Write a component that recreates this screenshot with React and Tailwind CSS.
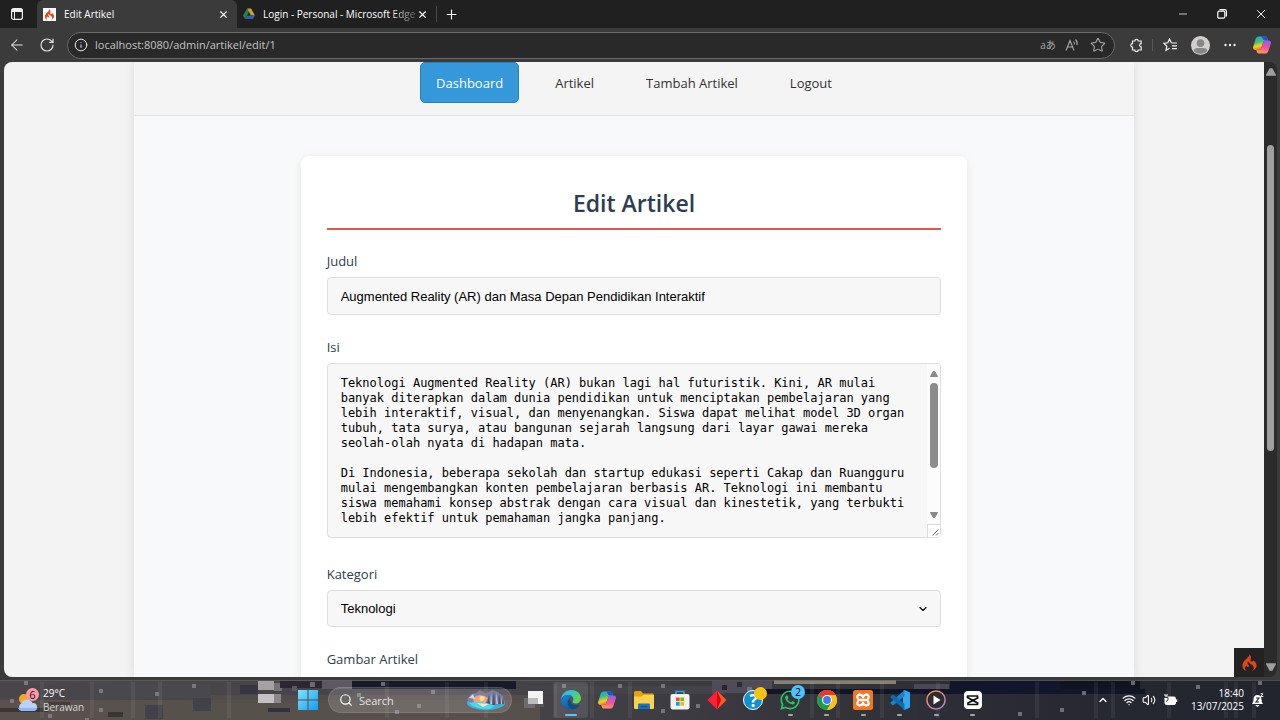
import React from "react";
import { SiCodeigniter } from "react-icons/si";
import { FaWhatsapp } from "react-icons/fa";
import { X, Plus, ArrowLeft, RotateCw, Info, Star, Minus, Search, ChevronUp, ChevronDown, Wifi, Volume2 } from "lucide-react";

const ARTICLE = `Teknologi Augmented Reality (AR) bukan lagi hal futuristik. Kini, AR mulai banyak diterapkan dalam dunia pendidikan untuk menciptakan pembelajaran yang lebih interaktif, visual, dan menyenangkan. Siswa dapat melihat model 3D organ tubuh, tata surya, atau bangunan sejarah langsung dari layar gawai mereka seolah-olah nyata di hadapan mata.

Di Indonesia, beberapa sekolah dan startup edukasi seperti Cakap dan Ruangguru mulai mengembangkan konten pembelajaran berbasis AR. Teknologi ini membantu siswa memahami konsep abstrak dengan cara visual dan kinestetik, yang terbukti lebih efektif untuk pemahaman jangka panjang.`;

function Copilot({ id }) {
  return (
    <svg viewBox="0 0 20 20" className="size-5">
      <defs>
        <linearGradient id={id + "a"} x1="0" y1="0" x2="0.3" y2="1">
          <stop offset="0" stopColor="#1aa7f0" />
          <stop offset="0.45" stopColor="#3bc07a" />
          <stop offset="0.75" stopColor="#f2d21b" />
          <stop offset="1" stopColor="#f2762e" />
        </linearGradient>
        <linearGradient id={id + "b"} x1="0.6" y1="0" x2="0.4" y2="1">
          <stop offset="0" stopColor="#9a5cf0" />
          <stop offset="0.5" stopColor="#f0529c" />
          <stop offset="1" stopColor="#ff9a5a" />
        </linearGradient>
      </defs>
      <path d="M9 1.5h4.2c1.2 0 1.700.7 2.100 1.800l.8 2.300h-2.600c-1.300 0-2 .7-2.400 2L9.300 13c-.4 1.200-1.200 1.900-2.400 1.900H3.300C1.500 14.900.7 13.500 1.200 11.700L3.600 4C4.200 2.300 5.300 1.500 7 1.500z" fill={"url(#" + id + "a)"} />
      <path d="M9 1.500h4.200c1.200 0 1.700.7 2.100 1.800l.8 2.300h-3c-1.500 0-2.100-.8-2.500-2C10.300 2.400 10 1.700 9 1.500z" fill="#2350d8" />
      <path d="M11 18.500H7c-1.200 0-1.800-.7-2.200-1.800L4.200 14.900h2.700c1.200 0 2-.7 2.400-1.900l1.800-5.400c.4-1.300 1.100-2 2.400-2h3.300c1.800 0 2.500 1.400 2 3.100l-2.400 7.200c-.6 1.700-1.700 2.600-3.400 2.600z" fill={"url(#" + id + "b)"} />
    </svg>
  );
}

function TitleBar() {
  return (
    <header className="flex h-7 items-end bg-[#202020] text-white">
      <button aria-label="Tab actions" className="flex h-7 w-[37px] items-center justify-center pr-1">
        <svg viewBox="0 0 12 12" className="size-3">
          <rect x="0.600" y="0.600" width="10.800" height="10.800" rx="2" fill="none" stroke="#eee" strokeWidth="1.200" />
          <path d="M1 1h10v3H1z" fill="#eee" />
          <path d="M3.500 4v7" stroke="#eee" />
        </svg>
      </button>
      <div className="flex h-7 w-[200px] items-center gap-2 rounded-t-md bg-[#3b3b3b] pl-1.5 pr-2">
        <span className="flex size-[13px] items-center justify-center bg-white">
          <SiCodeigniter className="size-[11px] text-[#dd4814]" />
        </span>
        <span className="flex-1 text-[10px]">Edit Artikel</span>
        <button aria-label="Close Edit Artikel"><X className="size-[11px]" strokeWidth={2.5} /></button>
      </div>
      <div className="flex h-7 w-[199px] items-center gap-2 pl-1.5 pr-2">
        <svg viewBox="0 0 24 22" className="size-3 shrink-0">
          <path d="M8 0h8l8 14h-8z" fill="#c9a227" />
          <path d="M8 0l4 7L4 21 0 14z" fill="#23834b" />
          <path d="M8 14h16l-4 7H4z" fill="#2e5fb8" />
        </svg>
        <span className="min-w-0 flex-1 whitespace-nowrap text-[10px]">Login - Personal - Microsoft <span className="bg-gradient-to-r from-white to-[#666] bg-clip-text text-transparent">Edge</span></span>
        <button aria-label="Close Login" className="shrink-0"><X className="size-[11px]" strokeWidth={2.5} /></button>
      </div>
      <span className="mb-1.5 h-4 w-px bg-[#4a4a4a]" />
      <button aria-label="New tab" className="flex h-7 w-7 items-center justify-center"><Plus className="size-[15px]" strokeWidth={1.8} /></button>
      <div className="ml-auto flex">
        <button aria-label="Minimize" className="flex h-7 w-[39px] items-center justify-center"><Minus className="size-3" strokeWidth={1.5} /></button>
        <button aria-label="Restore" className="flex h-7 w-[39px] items-center justify-center">
          <svg viewBox="0 0 10 10" className="size-2.5" fill="none" stroke="#fff" strokeWidth="1.200">
            <rect x="0.800" y="2.200" width="7" height="7" rx="1.200" />
            <path d="M2.500 0.700h5.200a1.700 1.700 0 0 1 1.700 1.700v5" />
          </svg>
        </button>
        <button aria-label="Close window" className="flex h-7 w-[39px] items-center justify-center"><X className="size-[14px]" strokeWidth={1.6} /></button>
      </div>
    </header>
  );
}

function Toolbar() {
  return (
    <div className="flex h-[34px] items-center bg-[#3b3b3b] text-[#e6e6e6]">
      <button aria-label="Back" className="flex w-[34px] justify-center">
        <ArrowLeft className="size-[18px]" strokeWidth={1.4} />
      </button>
      <button aria-label="Refresh" className="flex w-[26px] justify-center"><RotateCw className="size-4" strokeWidth={1.7} /></button>
      <div className="ml-[7px] flex h-[27px] min-w-0 flex-1 items-center rounded-full border border-[#6b6b6b] bg-[#292929] pl-1.5 pr-2">
        <Info className="size-[14px]" strokeWidth={1.7} />
        <input aria-label="Address" defaultValue="localhost:8080/admin/artikel/edit/1" className="ml-[7px] min-w-0 flex-1 bg-transparent text-[11px] text-[#c4c4c4] outline-none" />
        <button aria-label="Translate" className="w-[22px] font-['Open_Sans','Noto_Sans_CJK_JP',sans-serif] text-[10px] text-[#a8a8a8]">aあ</button>
        <button aria-label="Read aloud" className="ml-1.5 flex">
          <svg viewBox="0 0 14 14" className="size-[14px]" fill="none" stroke="#a8a8a8" strokeWidth="1.100">
            <path d="M1 12.500L5 2.500l4 10M2.500 9h5M8.500 3.500q1.200 1.300.8 3M10.500 1.500q2.300 2.300 1.500 5.500" />
          </svg>
        </button>
        <button aria-label="Favorite" className="ml-[11px]"><Star className="size-4 text-[#a8a8a8]" strokeWidth={1.6} /></button>
      </div>
      <button aria-label="Extensions" className="flex w-[37px] justify-center pl-1.5">
        <svg viewBox="0 0 14 14" className="size-[14px]" fill="none" stroke="#eee" strokeWidth="1.200">
          <path d="M2.500 3h2.300a1.700 1.700 0 0 1 3.400 0h3v2.700a1.600 1.600 0 0 0 0 3.200V12H8.200a1.700 1.700 0 0 1-3.400 0H2.500V9a1.700 1.700 0 0 1 0-3.400z" />
        </svg>
      </button>
      <span className="h-3 w-px bg-[#575757]" />
      <button aria-label="Favorites" className="flex w-[34px] justify-center">
        <svg viewBox="0 0 15 14" className="h-[14px] w-[15px]" fill="none" stroke="#eee" strokeWidth="1.200">
          <path d="M8.500 5L6.500 1 4.800 4.800.8 5.300l3 2.900L3 12.300l3.500-2M8.500 5h5.500M9 7.800h5M9 10.600h5" />
        </svg>
      </button>
      <button aria-label="Profile" className="flex w-[26px] justify-center">
        <svg viewBox="0 0 20 20" className="size-[19px]">
          <circle cx="10" cy="10" r="10" fill="#d2d0ce" />
          <circle cx="10" cy="7.500" r="4" fill="#8a8886" />
          <path d="M3 16q0-3.500 4-3.500h6q4 0 4 3.500a9.500 9.500 0 0 1-14 0z" fill="#8a8886" />
        </svg>
      </button>
      <button aria-label="Settings and more" className="flex w-[34px] justify-center">
        <svg viewBox="0 0 12 4" className="h-1 w-3" fill="#eee"><circle cx="1.500" cy="2" r="1.200" /><circle cx="6" cy="2" r="1.200" /><circle cx="10.500" cy="2" r="1.200" /></svg>
      </button>
      <button aria-label="Copilot" className="flex w-[33px] justify-center pr-1"><Copilot id="ct" /></button>
    </div>
  );
}

function Arrow({ down, className }) {
  return (
    <svg viewBox="0 0 8 6" className={className}>
      <path d={down ? "M.5.5h7L4.800 5.500h-1.600z" : "M.5 5.500h7L4.800.5h-1.600z"} fill="currentColor" stroke="currentColor" strokeLinejoin="round" />
    </svg>
  );
}

const links = ["Artikel", "Tambah Artikel", "Logout"];
const labelClass = "mb-1.5 block h-5 text-[13px] font-medium leading-5 text-[#2c3e50]";

function Page() {
  return (
    <div className="mx-auto h-full max-w-[1000px] bg-[#f8f9fb] shadow-[0_0_10px_rgba(0,0,0,0.1)]">
      <nav className="flex justify-center gap-5 border-b border-[#e2e3e4] bg-[#f4f4f4] pb-3">
        <a href="#dashboard" className="flex h-[41px] items-center rounded-[5px] border border-[#2980b9] bg-[#3498db] px-[15px] pt-0.5 text-[13px] font-medium text-white">Dashboard</a>
        {links.map((l) => (
          <a key={l} href="#menu" className="flex h-[41px] items-center px-4 pt-0.5 text-[13px] font-medium text-[#333]">{l}</a>
        ))}
      </nav>
      <form className="mx-auto mt-10 w-2/3 rounded-lg bg-white px-[26px] pb-8 pt-[25px] shadow-[0_2px_10px_rgba(0,0,0,0.08)]">
        <h2 className="mb-[21px] h-[49px] border-b-2 border-[#df5a4c] text-center text-[23px] font-semibold leading-[44px] text-[#2c3e50]">Edit Artikel</h2>
        <div className="mb-[22px]">
          <label htmlFor="judul" className={labelClass}>Judul</label>
          <input id="judul" defaultValue="Augmented Reality (AR) dan Masa Depan Pendidikan Interaktif" className="block h-[38px] w-full rounded border border-[#dedede] bg-[#f7f7f7] px-[13px] font-['Liberation_Sans',sans-serif] text-[13px] text-black" />
        </div>
        <div className="mb-[26px]">
          <label htmlFor="isi" className={labelClass}>Isi</label>
          <div className="flex h-[175px] overflow-hidden rounded border border-[#dedede] bg-[#f7f7f7]">
            <textarea id="isi" defaultValue={ARTICLE} className="min-w-0 flex-1 resize-none overflow-hidden bg-transparent pb-2 pl-[13px] pr-2 pt-3 font-['DejaVu_Sans_Mono',monospace] text-xs leading-[15px] text-black outline-none" />
            <div className="flex w-[13px] flex-col items-center bg-[#fcfcfc] text-[#8b8b8b]">
              <Arrow className="mt-[7px] h-1.5 w-2" />
              <div className="mt-1.5 h-[85px] w-2 rounded-full bg-[#8b8b8b]" />
              <Arrow down className="mt-auto h-1.5 w-2" />
              <div className="mt-1.5 flex h-[13px] w-full items-end justify-end border-l border-t border-[#dcdcdc] bg-white p-px">
                <svg viewBox="0 0 7 7" className="size-[7px]" stroke="#555" strokeWidth="0.900"><path d="M0.500 6.500l6-6M4 6.500l2.500-2.500" /></svg>
              </div>
            </div>
          </div>
        </div>
        <div className="mb-[22px]">
          <label htmlFor="kategori" className={labelClass}>Kategori</label>
          <div className="grid items-center">
            <select id="kategori" className="col-start-1 row-start-1 h-[37px] w-full appearance-none rounded border border-[#dedede] bg-[#f7f7f7] px-[13px] font-['Liberation_Sans',sans-serif] text-[13px] text-black">
              <option>Teknologi</option>
            </select>
            <ChevronDown className="pointer-events-none col-start-1 row-start-1 mr-3 size-3 justify-self-end text-black" strokeWidth={2.2} />
          </div>
        </div>
        <label htmlFor="gambar" className={labelClass}>Gambar Artikel</label>
        <input id="gambar" type="file" className="text-[13px]" />
      </form>
    </div>
  );
}

const blocks = [
  [0, 20, 540, 20, "#5b544e", 0.8], [210, 15, 330, 8, "#554f4b", 0.8], [0, 4, 95, 13, "#48464b", 0.8],
  [95, 3, 115, 15, "#4a4950", 0.8], [145, 25, 18, 14, "#42414b", 1], [193, 18, 18, 13, "#41414a", 1],
  [0, 28, 48, 4, "#3c3633", 1], [48, 22, 22, 4, "#3f3a38", 0.8], [108, 32, 15, 5, "#3a3532", 1], [240, 5, 18, 9, "#353640", 1],
  [258, 1, 16, 9, "#a8a1a4", 1], [258, 14, 16, 9, "#c5c0c6", 1], [274, 3, 8, 8, "#77727a", 1], [274, 14, 7, 9, "#8b878d", 1],
  [280, 1, 46, 7, "#2b2833", 1], [322, 0, 30, 9, "#5c5864", 1], [352, 1, 164, 8, "#171a2b", 1],
  [292, 6, 5, 5, "#5e5964", 1], [310, 2, 5, 5, "#6d6873", 1], [268, 28, 22, 4, "#30323e", 1],
  [516, 6, 210, 8, "#44434a", 1], [712, 1, 60, 12, "#4f4c58", 1], [722, 5, 5, 5, "#262633", 1], [737, 2, 5, 5, "#2c2b38", 1], [747, 7, 5, 5, "#737080", 1],
  [760, 9, 385, 5, "#111526", 1], [950, 1, 165, 13, "#10172a", 1], [774, 0, 122, 4, "#878172", 1],
  [1060, 1, 80, 8, "#101421", 1], [914, 4, 35, 5, "#4b4856", 1],
];
const sparks = [[24, 1], [192, 4], [155, 12], [99, 9], [99, 28], [10, 19], [48, 34], [85, 38], [381, 2], [357, 13], [431, 10], [417, 24], [395, 30], [562, 4], [618, 4], [661, 4], [696, 24], [661, 29], [1018, 32], [1060, 28], [1082, 11], [1131, 1], [1196, 5], [1258, 1]];
const rails = [40, 90, 131, 158, 227, 385, 445, 484, 553, 590, 628, 810, 836, 880, 936, 1035, 1094, 1111, 1167, 1224, 1234, 1252];

function Wallpaper() {
  return (
    <svg viewBox="0 0 1280 40" preserveAspectRatio="none" className="absolute inset-0 h-full w-full" aria-hidden="true">
      <defs>
        <linearGradient id="wall"><stop offset="0" stopColor="#4b474a" /><stop offset="0.4" stopColor="#454348" /><stop offset="0.55" stopColor="#3a3a40" /><stop offset="0.8" stopColor="#292a32" /><stop offset="1" stopColor="#22252e" /></linearGradient>
      </defs>
      <rect width="1280" height="40" fill="url(#wall)" />
      {blocks.map(([x, y, w, h, c, o], i) => <rect key={i} x={x} y={y} width={w} height={h} fill={c} opacity={o} />)}
      {rails.map((x) => <rect key={x} x={x} y="2" width="4" height="36" fill="#fff" opacity="0.060" />)}
      {sparks.map(([x, y], i) => <rect key={i} x={x} y={y} width="4" height="4" fill="#8b8b93" opacity="0.700" />)}
      <rect width="1280" height="1" fill="#686868" opacity="0.600" />
    </svg>
  );
}

const apps = [
  ["Task view", <svg viewBox="0 0 22 20" className="h-5 w-[22px]"><path d="M1 8h11v10H1z" fill="#6c6c6c" /><path d="M12 12h9v5h-9z" fill="#555" /><path d="M5 1h15v13H5z" fill="#f4f4f4" /><path d="M5 8h10v6H5z" fill="#bcbcbc" /></svg>],
  ["Edge", <svg viewBox="0 0 20 20" className="size-5">
    <defs>
      <linearGradient id="e1" x1="0" x2="1" y2="0.400"><stop offset="0" stopColor="#2cb7ee" /><stop offset="0.500" stopColor="#35c5c8" /><stop offset="1" stopColor="#62d44e" /></linearGradient>
      <linearGradient id="e2" x1="0" y1="0" x2="0.500" y2="1"><stop offset="0" stopColor="#1a86d8" /><stop offset="1" stopColor="#0d5ca8" /></linearGradient>
    </defs>
    <path d="M0 9.500C.5 4 4.700 0 10.200 0 16 0 20 4 20 8.200c0 3.200-2.500 5.300-5.500 5.300-2 0-3-.7-3-1.400s.9-1 .9-2.500C12.600 7 10.200 5 7 5 3.500 5 .8 7 0 9.500z" fill="url(#e1)" />
    <path d="M0 10c.6-3 3.500-5 7-5 2 0 3.500.7 4.500 1.800C8.500 6.800 6.500 9 6.500 12c0 4 3 7 7.500 6.800A10 10 0 0 1 0 10z" fill="url(#e2)" />
    <path d="M9 9C7 10.500 6.500 12 6.700 13.500 7.200 17 10 19 13.500 19c2.200-.7 4-2 5-3.800.3-.6-.1-.8-.6-.5C13.500 16.800 9 14 9 9z" fill="#114a8b" />
  </svg>, "active"],
  ["Copilot", <Copilot id="cb" />],
  ["File Explorer", <svg viewBox="0 0 20 18" className="h-[18px] w-5"><path d="M0 1.500Q0 0 1.500 0H7l2 2.500h9.500Q20 2.500 20 4v13.500H0z" fill="#e6a117" /><path d="M0 5.500h7.500L9.500 4H20v12.500Q20 18 18.500 18h-17Q0 18 0 16.500z" fill="#ffd04c" /><path d="M4 18v-4.500Q4 12.500 5 12.500h10q1 0 1 1V18z" fill="#1474c4" /><path d="M6.500 15h7v1.200h-7z" fill="#0a4d91" /></svg>],
  ["Microsoft Store", <svg viewBox="0 0 20 20" className="size-5"><path d="M6 5V1.500h8V5" fill="none" stroke="#30a9dc" strokeWidth="1.500" /><rect x="0.500" y="4" width="19" height="15.500" rx="2" fill="#f3f3f3" /><path d="M6 7.500h3.700v3.700H6z" fill="#f25022" /><path d="M10.400 7.500h3.700v3.700h-3.700z" fill="#7fba00" /><path d="M6 12h3.700v3.700H6z" fill="#00a4ef" /><path d="M10.400 12h3.700v3.700h-3.700z" fill="#ffb900" /></svg>],
  ["Diamond", <svg viewBox="0 0 20 20" className="size-5"><path d="M10 .5v19L.5 10z" fill="#ff1f3a" /><path d="M10 .5L14 10l-4 9.500z" fill="#e0000c" /><path d="M10 .5l9.500 9.500-9.500 9.500L14 10z" fill="#ff5a1e" /></svg>],
  ["Help", <span className="relative flex size-5 items-center justify-center rounded-full border border-white bg-[#1192d0] text-[17px] font-bold leading-none text-white">?<span className="absolute -right-[5px] -top-1 size-[13px] rounded-full bg-[#ffc20a]" /></span>],
  ["WhatsApp", <span className="relative flex"><FaWhatsapp className="size-[22px] text-[#25c864]" /><span className="absolute -right-1 -top-1 flex size-[14px] items-center justify-center rounded-full bg-[#4cc2ff] text-[10px] text-black">2</span></span>, "open"],
  ["Chrome", <svg viewBox="0 0 20 20" className="size-5"><circle cx="10" cy="10" r="10" fill="#fbc116" /><path d="M10 10L1.340 5A10 10 0 0 1 18.660 5z" fill="#e33b2e" /><path d="M10 5h8.660A10 10 0 0 0 1.340 5z" fill="#e33b2e" /><path d="M1.340 5A10 10 0 0 0 10 20l4.330-7.500L10 10z" fill="#229a4b" /><path d="M14.330 12.500L10 20A10 10 0 0 0 18.660 5H10z" fill="#fbc116" /><circle cx="10" cy="10" r="5" fill="#fff" /><circle cx="10" cy="10" r="3.900" fill="#3b7ded" /></svg>, "open"],
  ["XAMPP", <svg viewBox="0 0 20 20" className="size-5"><rect width="20" height="20" rx="2.500" fill="#f37623" /><path d="M10 7.200C9 3.800 4.300 3.600 4.300 6.800c0 1.600 1 2.300 1.700 3.200-.9.900-1.700 1.700-1.700 3.200 0 3.200 4.700 3 5.700-.4 1 3.400 5.700 3.600 5.700.4 0-1.500-.8-2.300-1.700-3.200.7-.9 1.700-1.600 1.700-3.200 0-3.200-4.700-3-5.700.4zM7 10h6" fill="none" stroke="#fff" strokeWidth="2.300" strokeLinejoin="round" /></svg>, "open"],
  ["Visual Studio Code", <svg viewBox="0 0 20 20" className="size-5"><path d="M14.500 0L20 2.500v15L14.500 20 13 19V1z" fill="#32a8f0" /><path d="M14.500 0v6L3 15.500 0.500 13.500V12.500z" fill="#1484cf" /><path d="M14.500 20v-6L3 4.500.5 6.500v1z" fill="#0b6db5" /></svg>, "open"],
  ["Media Player", <svg viewBox="0 0 20 20" className="size-5"><defs><linearGradient id="mp" x1="0" y1="0" x2="0.700" y2="1"><stop offset="0" stopColor="#ff9440" /><stop offset="1" stopColor="#b183c8" /></linearGradient></defs><circle cx="10" cy="10" r="9.100" fill="#2d2c33" stroke="url(#mp)" strokeWidth="1.500" /><path d="M7.500 5.500v9l7-4.500z" fill="#fff" /></svg>, "open"],
  ["CapCut", <svg viewBox="0 0 18 18" className="size-[18px]"><rect width="18" height="18" rx="4" fill="#fff" /><path d="M14.500 6.500L4 12v1.500h9.500V12L3.500 6.500V5h10v1.500M14.500 12.500L10 10" fill="none" stroke="#111" strokeWidth="1.700" strokeLinejoin="round" /></svg>, "open"],
];

function Taskbar() {
  return (
    <footer className="relative h-10 shrink-0 bg-[#333338] text-white">
      <Wallpaper />
      <div className="relative grid h-full grid-cols-[1fr_700px_1fr] items-center">
        <button className="flex items-center gap-1 pl-[17px] text-left">
          <svg viewBox="0 0 22 24" className="h-6 w-[22px]">
            <circle cx="7" cy="11" r="5" fill="#f6a722" />
            <path d="M4.500 23a4.500 4.500 0 0 1 0-8 6 6 0 0 1 11 0A4 4 0 0 1 16.500 23z" fill="#b9d2fa" />
            <path d="M4.500 23a4.500 4.500 0 0 1-3.500-3h19a4 4 0 0 1-3.500 3z" fill="#91b5f0" />
            <circle cx="15.500" cy="6.500" r="6.500" fill="#ff99a4" />
            <text x="15.500" y="10.500" textAnchor="middle" fontSize="11" fill="#202020">6</text>
          </svg>
          <span className="block text-[10px] leading-[14px]">29°C<span className="block text-[#d5d5d5]">Berawan</span></span>
        </button>
        <div className="flex h-full items-center">
          <button aria-label="Start" className="flex w-[38px] shrink-0 justify-center pr-0.5">
            <svg viewBox="0 0 20 20" className="size-5"><defs><linearGradient id="st" x2="1" y2="1"><stop offset="0" stopColor="#7fe3ff" /><stop offset="1" stopColor="#129cf0" /></linearGradient></defs><path d="M0 0h9.500v9.500H0zM10.500 0H20v9.500h-9.500zM0 10.500h9.500V20H0zM10.500 10.500H20V20h-9.500z" fill="url(#st)" /></svg>
          </button>
          <div className="flex h-[26px] w-[184px] shrink-0 items-center rounded-full border border-white/10 bg-white/15 pl-2.5 pr-1">
            <Search className="size-[14px] shrink-0" strokeWidth={2} />
            <input aria-label="Search" placeholder="Search" className="ml-1.5 w-[95px] min-w-0 bg-transparent pt-0.5 text-[11px] outline-none placeholder:text-[#e4e4e4]" />
            <svg viewBox="0 0 42 22" className="ml-auto h-[22px] w-[42px]">
              <ellipse cx="21" cy="14" rx="19" ry="7" fill="#2fb6dc" />
              <path d="M2 10l4-5 5-1 4-3 6 3 3-1 3-2 6 2 5 4 2 7-9 2H8z" fill="#7d7f9e" />
              <path d="M8 9q7-6 15 0l-3 6H9z" fill="#f2a47c" />
              <circle cx="17" cy="9.500" r="2.500" fill="#ffe28a" />
              <path d="M24 5l1 10h-3zM29 2l1 14h-3zM34 4l2 11h-3zM38 8l1 7h-2z" fill="#50546f" />
              <path d="M26 4l1 11h-1.500zM31 3l2 12h-1.500zM36 7l1 8h-1zM4 9l4-4 2 5z" fill="#d3d4e4" />
              <path d="M4 14q12-3 26 3l-5 3q-15 1-21-6z" fill="#50d5e8" />
              <path d="M12 14l12 1-6 3z" fill="#f6e3bf" />
            </svg>
          </div>
          <div className="ml-[5px] flex h-full flex-1 justify-between">
            {apps.map(([name, icon, state]) => (
              <button key={name} aria-label={name} className={state === "active" ? "relative flex h-9 w-[34px] items-center justify-center self-center rounded bg-white/10" : "relative flex h-full w-[34px] items-center justify-center"}>
                {icon}
                {state === "active" && <span className="absolute bottom-0.5 h-0.5 w-3 rounded-full bg-[#5bc5f5]" />}
                {state === "open" && <span className="absolute bottom-1 h-0.5 w-[5px] rounded-full bg-[#a5a5a8]" />}
              </button>
            ))}
          </div>
        </div>
        <div className="flex items-center justify-end pr-4">
          <ChevronUp className="mr-[13px] size-3" strokeWidth={2.5} />
          <Wifi className="mr-1.5 size-[14px]" strokeWidth={2.2} />
          <Volume2 className="mr-[7px] size-[14px]" strokeWidth={1.8} />
          <svg viewBox="0 0 15 12" className="h-3 w-[15px]"><rect x="2" y="3" width="10.500" height="7.500" rx="1.500" fill="#fff" stroke="#fff" /><path d="M13.500 5.500v2.500" stroke="#fff" strokeWidth="1.500" /><path d="M3 0v3M1 3.500h4v2.500l-2 1.500" stroke="#2a2a33" strokeWidth="0.900" fill="#fff" /><path d="M2 0v2h2V0" stroke="#fff" fill="none" /></svg>
          <div className="ml-[13px] text-right text-[10px] leading-[13px]"><div>18:40</div><div>13/07/2025</div></div>
          <svg viewBox="0 0 13 14" className="ml-[7px] h-[14px] w-[13px]"><path d="M1 11q1.500-1.500 1.500-4.500 0-4.500 4-4.500t4 4.500q0 3 1.500 4.500zM4.500 12h4q-.5 1.800-2 1.800t-2-1.800z" fill="#fff" /><path d="M5 5h3L5 9h3" fill="none" stroke="#25262e" strokeWidth="1.100" /><path d="M9.500.8h2.500L9.800 3.500h2.500" fill="none" stroke="#fff" strokeWidth="0.900" /></svg>
        </div>
      </div>
    </footer>
  );
}

export default function App() {
  return (
    <div className="flex h-screen flex-col overflow-hidden bg-[#3b3b3b] font-['Open_Sans',sans-serif]">
      <TitleBar />
      <Toolbar />
      <div className="mb-[3px] ml-1 mr-[3px] flex min-h-0 flex-1 overflow-hidden rounded-lg bg-[#2b2b2b]">
        <main className="relative min-w-0 flex-1 overflow-hidden bg-[#f3f3f3]">
          <Page />
          <button aria-label="Debug toolbar" className="absolute bottom-0 right-0 flex h-[29px] w-[30px] items-center justify-center bg-[#222]">
            <SiCodeigniter className="size-[17px] text-[#dd4814]" />
          </button>
        </main>
        <div className="flex w-[13px] flex-col items-center py-1.5 text-[#9f9f9f]">
          <Arrow className="h-2 w-2.5" />
          <div className="mt-[69px] h-[306px] w-[7px] rounded-full bg-[#9f9f9f]" />
          <Arrow down className="mt-auto h-2 w-2.5" />
        </div>
      </div>
      <Taskbar />
    </div>
  );
}
